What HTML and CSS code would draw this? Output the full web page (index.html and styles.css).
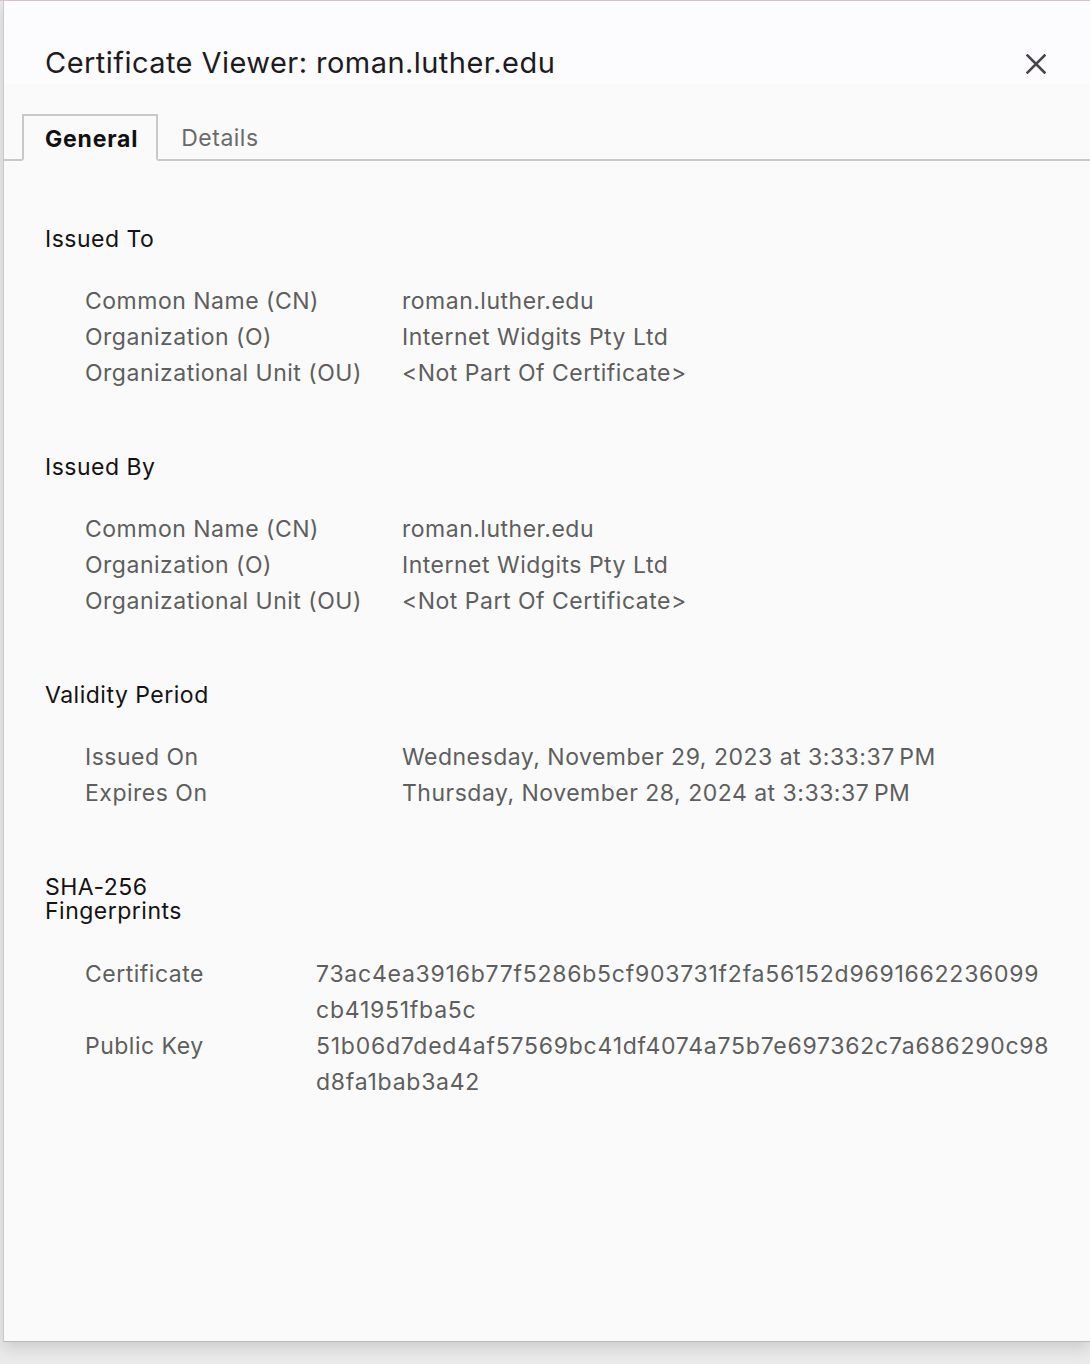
FILE: index.html
```html
<!DOCTYPE html>
<html lang="en">
<head>
<meta charset="utf-8">
<title>Certificate Viewer</title>
<link rel="stylesheet" href="styles.css">
</head>
<body>
<div class="top-line"></div>
<div class="dialog">
  <div class="header">
    <h1 class="title">Certificate Viewer: roman.luther.edu</h1>
    <button class="close" aria-label="Close">
      <svg width="20" height="20" viewBox="0 0 20 20"><path d="M1.5 1.5 L18.5 18.5 M18.5 1.5 L1.5 18.5" stroke="#48444a" stroke-width="2.6" stroke-linecap="square"/></svg>
    </button>
  </div>
  <div class="tabs">
    <div class="tab active">General</div>
    <div class="tab">Details</div>
  </div>
  <div class="content">
    <section class="section">
      <h2 class="heading">Issued To</h2>
      <div class="rows">
        <div class="label">Common Name (CN)</div><div class="value">roman.luther.edu</div>
        <div class="label">Organization (O)</div><div class="value">Internet Widgits Pty Ltd</div>
        <div class="label">Organizational Unit (OU)</div><div class="value">&lt;Not Part Of Certificate&gt;</div>
      </div>
    </section>
    <section class="section">
      <h2 class="heading">Issued By</h2>
      <div class="rows">
        <div class="label">Common Name (CN)</div><div class="value">roman.luther.edu</div>
        <div class="label">Organization (O)</div><div class="value">Internet Widgits Pty Ltd</div>
        <div class="label">Organizational Unit (OU)</div><div class="value">&lt;Not Part Of Certificate&gt;</div>
      </div>
    </section>
    <section class="section">
      <h2 class="heading">Validity Period</h2>
      <div class="rows">
        <div class="label">Issued On</div><div class="value">Wednesday, November 29, 2023 at 3:33:37&#8239;PM</div>
        <div class="label">Expires On</div><div class="value">Thursday, November 28, 2024 at 3:33:37&#8239;PM</div>
      </div>
    </section>
    <section class="section">
      <h2 class="heading heading-narrow">SHA-256 Fingerprints</h2>
      <div class="rows rows-fp">
        <div class="label">Certificate</div><div class="value">73ac4ea3916b77f5286b5cf903731f2fa56152d9691662236099<br>cb41951fba5c</div>
        <div class="label">Public Key</div><div class="value">51b06d7ded4af57569bc41df4074a75b7e697362c7a686290c98<br>d8fa1bab3a42</div>
      </div>
    </section>
  </div>
</div>
</body>
</html>
```

FILE: styles.css
```css
html, body {
  margin: 0;
  padding: 0;
}
body {
  background: #ebebeb;
  font-family: Inter, "Noto Sans", "Liberation Sans", sans-serif;
  overflow: hidden;
  height: 1364px;
}
.top-line {
  height: 1px;
  background: #e3c4cb;
}
.dialog {
  margin-left: 3px;
  height: 1341px;
  background: #fafafa;
  border-left: 1px solid #c9c9c9;
  border-bottom: 1px solid #b9b9b9;
  box-shadow: 0 6px 16px rgba(0, 0, 0, 0.14);
  box-sizing: border-box;
}
.header {
  height: 83px;
  box-sizing: border-box;
  background: #fcfbfd;
  display: flex;
  align-items: flex-start;
  justify-content: space-between;
  padding: 44px 44px 0 41px;
}
.title {
  margin: 0;
  font-size: 29px;
  line-height: 36px;
  font-weight: 400;
  color: #1e1b1f;
  letter-spacing: 0.45px;
}
.close {
  border: 0;
  background: none;
  padding: 0;
  margin-top: 9px;
  width: 20px;
  height: 20px;
  display: flex;
}
.tabs {
  display: flex;
  align-items: flex-end;
  height: 77px;
  padding-left: 18px;
  border-bottom: 2px solid #c8c8c8;
  box-sizing: border-box;
}
.tab {
  height: 47px;
  box-sizing: border-box;
  padding: 2px 20px 0 23px;
  font-size: 23px;
  line-height: 45px;
  letter-spacing: 0.5px;
  color: #6a6a6a;
  margin-bottom: -2px;
}
.tab.active {
  border: 2px solid #c8c8c8;
  border-bottom-color: #fafafa;
  color: #111;
  font-weight: 700;
  letter-spacing: 0.8px;
  background: #fafafa;
  padding: 2px 18px 0 21px;
  line-height: 43px;
}
.content {
  padding: 60px 0 0 41px;
}
.section {
  margin-bottom: 58px;
}
.heading {
  margin: 0 0 26px 0;
  font-size: 23px;
  font-weight: 400;
  line-height: 36px;
  letter-spacing: 0.5px;
  color: #141214;
}
.heading-narrow {
  width: 160px;
  line-height: 24px;
  padding-top: 6px;
  margin-bottom: 33px;
}
.rows {
  display: grid;
  grid-template-columns: 317px 1fr;
  padding-left: 40px;
  font-size: 23px;
  line-height: 36px;
  letter-spacing: 0.5px;
  color: #5e5e5e;
}
.rows-fp {
  grid-template-columns: 231px 1fr;
}
.rows-fp .value {
  letter-spacing: 0.75px;
}
.label, .value {
  white-space: nowrap;
}
```
